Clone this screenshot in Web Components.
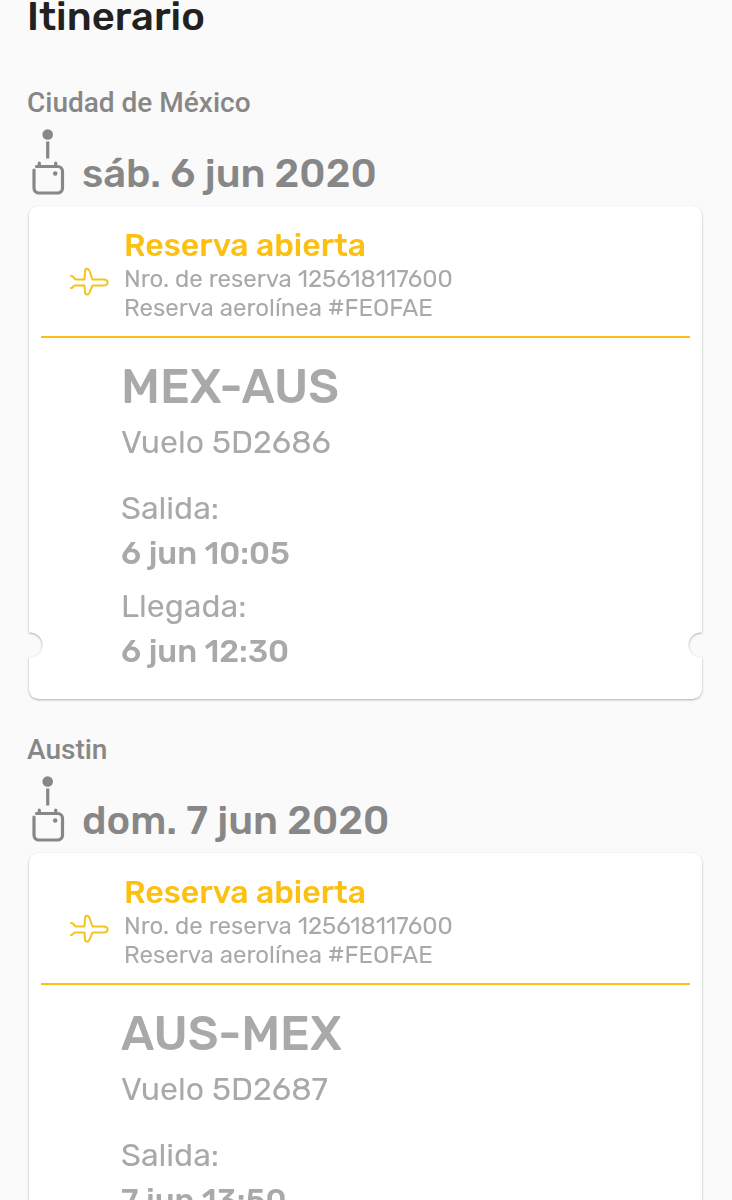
<!DOCTYPE html>
<html lang="es">
<head>
<meta charset="utf-8">
<meta name="viewport" content="width=device-width, initial-scale=1">
<title>Itinerario</title>
<style>
  html {
    background: #fafafa;
    scrollbar-width: none;
  }
  body {
    margin: 0;
    font-family: Rubik, Inter, Roboto, sans-serif;
  }
</style>
</head>
<body>
<trip-itinerary heading="Itinerario">
  <trip-stop city="Ciudad de México" date="sáb. 6 jun 2020">
    <flight-card route="MEX-AUS">
      <span slot="status">Reserva abierta</span>
      <span slot="booking">Nro. de reserva 125618117600</span>
      <span slot="airline">Reserva aerolínea #FEOFAE</span>
      <span slot="flight">Vuelo 5D2686</span>
      <span slot="departure">6 jun 10:05</span>
      <span slot="arrival">6 jun 12:30</span>
    </flight-card>
  </trip-stop>
  <trip-stop city="Austin" date="dom. 7 jun 2020">
    <flight-card route="AUS-MEX">
      <span slot="status">Reserva abierta</span>
      <span slot="booking">Nro. de reserva 125618117600</span>
      <span slot="airline">Reserva aerolínea #FEOFAE</span>
      <span slot="flight">Vuelo 5D2687</span>
      <span slot="departure">7 jun 13:50</span>
    </flight-card>
  </trip-stop>
</trip-itinerary>

<script>
// TripItinerary
let itineraryTemplate = document.createElement("template");

itineraryTemplate.innerHTML = /* html */ `
<style>
    :host {
      display: block;
      padding: 1px 30px 32px 27px;
    }
    h1 {
      margin: 0 0 55px;
      font-size: 40px;
      font-weight: 500;
      line-height: 32px;
      color: #212121;
    }
    .stops {
      display: flex;
      flex-direction: column;
      gap: 36px;
    }
</style>
<h1></h1>
<div class='stops'>
  <slot></slot>
</div>
`;

class TripItinerary extends HTMLElement {
  constructor() {
    super();
    let shadow = this.attachShadow({ mode: "open" });
    shadow.appendChild(itineraryTemplate.content.cloneNode(true));
    shadow.querySelector("h1").textContent = this.getAttribute("heading");
  }
}

// TripStop
let stopTemplate = document.createElement("template");

stopTemplate.innerHTML = /* html */ `
<style>
    :host {
      display: block;
    }
    h2, p {
      margin: 0;
      color: #878787;
    }
    p {
      font-family: Roboto, sans-serif;
      font-size: 28px;
      font-weight: 500;
      line-height: 30px;
    }
    .day {
      display: flex;
      align-items: flex-end;
      gap: 15px;
      margin: 10px 0;
    }
    h2 {
      font-size: 40px;
      font-weight: 500;
      line-height: 44px;
    }
    svg {
      flex: none;
      width: 40px;
      height: 68px;
    }
</style>
<p></p>
<div class='day'>
  <svg viewBox='0 0 40 68' fill='none' stroke='#878787' stroke-width='3.200' aria-hidden='true'>
    <circle cx='20.700' cy='6.500' r='5.300' fill='#878787' stroke='none'/>
    <path d='M20.700 13.500V30.500'/>
    <path d='M9.500 38.500H30.500a5 5 0 0 1 5 5V60a5 5 0 0 1-5 5H12a5 5 0 0 1-5-5V42' stroke-linecap='round'/>
    <path d='M12.300 37.500V35M28.700 37.500V35' stroke-linecap='round'/>
    <circle cx='28.200' cy='45.500' r='2.300' fill='#878787' stroke='none'/>
  </svg>
  <h2></h2>
</div>
<slot></slot>
`;

class TripStop extends HTMLElement {
  constructor() {
    super();
    let shadow = this.attachShadow({ mode: "open" });
    shadow.appendChild(stopTemplate.content.cloneNode(true));
    shadow.querySelector("p").textContent = this.getAttribute("city");
    shadow.querySelector("h2").textContent = this.getAttribute("date");
  }
}

// FlightCard
let cardTemplate = document.createElement("template");

cardTemplate.innerHTML = /* html */ `
<style>
    :host {
      display: block;
      margin-left: 2px;
      color: #a9a9a9;
      filter: drop-shadow(0 1px 1px rgba(0, 0, 0, 0.3));
    }
    /* the two side notches are cut out of the card */
    article {
      padding: 22px 12px 26px;
      border-radius: 9px;
      background: #fff;
      -webkit-mask:
        radial-gradient(circle at 1px calc(100% - 54px), transparent 12px, #000 13px),
        radial-gradient(circle at calc(100% - 1px) calc(100% - 54px), transparent 12px, #000 13px);
      -webkit-mask-composite: source-in;
      mask-composite: intersect;
    }
    header {
      display: flex;
      align-items: center;
      gap: 13px;
      padding: 0 0 13px 28px;
      border-bottom: 2px solid #fbc012;
      font-size: 24px;
      line-height: 29px;
    }
    svg {
      flex: none;
      width: 42px;
      height: 32px;
      margin-top: 12px;
    }
    .status {
      margin-bottom: 3px;
      font-size: 32px;
      font-weight: 500;
      line-height: 34px;
      color: #fbc012;
    }
    .body {
      padding: 21px 0 0 80px;
      font-size: 32px;
      line-height: 46px;
    }
    h3 {
      margin: 0 0 4px;
      font-size: 48px;
      font-weight: 500;
      line-height: 56px;
    }
    dl {
      margin: 20px 0 0;
    }
    dd {
      min-height: 44px;
      margin: 0 0 8px;
      font-weight: 500;
      line-height: 44px;
    }
    dd:last-child {
      margin: 0;
    }
</style>
<article>
  <header>
    <svg viewBox='0 0 42 32' fill='none' stroke='#f5c31f' stroke-width='2' stroke-linecap='round' stroke-linejoin='round' aria-hidden='true'>
      <path d='M2 10C5 9.500 4.500 13.500 7.500 13.500H15.500L16 5.500C16 2 19.500 2 20.500 5L23.500 13.500H34.500C40 13.500 40 19.500 34.500 19.500H23.500L20.500 26.500C19.500 29.500 16 29 16 26L15.500 19.500H6C4 19.500 4 22.500 2 22'/>
    </svg>
    <div>
      <div class='status'><slot name='status'></slot></div>
      <div><slot name='booking'></slot></div>
      <div><slot name='airline'></slot></div>
    </div>
  </header>
  <div class='body'>
    <h3></h3>
    <div><slot name='flight'></slot></div>
    <dl>
      <dt>Salida:</dt>
      <dd><slot name='departure'></slot></dd>
      <dt>Llegada:</dt>
      <dd><slot name='arrival'></slot></dd>
    </dl>
  </div>
</article>
`;

class FlightCard extends HTMLElement {
  constructor() {
    super();
    let shadow = this.attachShadow({ mode: "open" });
    shadow.appendChild(cardTemplate.content.cloneNode(true));
    shadow.querySelector("h3").textContent = this.getAttribute("route");
  }
}

customElements.define("trip-itinerary", TripItinerary);
customElements.define("trip-stop", TripStop);
customElements.define("flight-card", FlightCard);
</script>
</body>
</html>
